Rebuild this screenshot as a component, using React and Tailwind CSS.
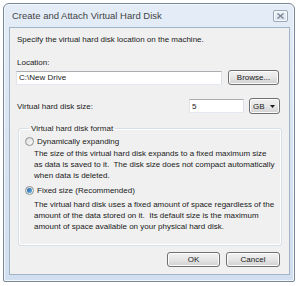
import React from "react";

function Radio({ checked }) {
  return (
    <span className="relative inline-flex h-[9px] w-[9px] shrink-0 items-center justify-center rounded-full border border-[#8e8f8f] bg-gradient-to-br from-[#dcdcdc] to-[#fbfbfb]">
      {checked && (
        <span className="h-[5px] w-[5px] rounded-full bg-gradient-to-br from-[#1b5d9b] to-[#6fb6e9] shadow-[0_0_1px_#9cd0f2]" />
      )}
    </span>
  );
}

function Button({ children, className }) {
  return (
    <div
      className={
        "flex h-[15px] items-center justify-center rounded-[3px] border border-[#707070] bg-gradient-to-b from-[#f2f2f2] via-[#e6e6e6] to-[#d0d0d0] text-[8px] leading-none text-[#1a1a1a] shadow-[inset_0_0_0_1px_#fcfcfc] " +
        (className || "")
      }
    >
      {children}
    </div>
  );
}

export default function App() {
  return (
    <div className="h-[286px] w-[300px] bg-white pl-[3px] pt-[3px] font-['Liberation_Sans',Arial,sans-serif] text-[#1a1a1a]">
      <div className="flex h-[279px] w-[292px] flex-col rounded-t-[6px] rounded-b-[2px] border border-[#7a8797] bg-gradient-to-b from-[#e4edf7] via-[#d8e4f2] to-[#d2dff0] shadow-[inset_0_0_0_1px_#f3f7fc]">
        {/* Title bar */}
        <div className="flex h-[23px] shrink-0 items-start justify-between pl-[8px] pr-[6px]">
          <span className="mt-[6px] text-[9.5px] leading-[12px] text-[#444]">
            Create and Attach Virtual Hard Disk
          </span>
          <div className="mt-[6px] flex h-[12px] w-[15px] items-center justify-center rounded-[2px] border border-[#9aa7b6] bg-gradient-to-b from-[#f0f4f9] to-[#d9e2ed] shadow-[inset_0_0_0_1px_#f7fafd]">
            <svg width="7" height="6" viewBox="0 0 7 6">
              <path d="M0.5 0.5 L6.5 5.5 M6.5 0.5 L0.5 5.5" stroke="#7d8a99" strokeWidth="1.5" />
            </svg>
          </div>
        </div>
        {/* Client area */}
        <div className="ml-[5px] mr-[4px] flex h-[248px] flex-col border border-[#a3b3c6] bg-[#f0f0f0] pb-[7px] pl-[6px] pr-[9px] text-[8px] leading-[11px]">
          <div className="ml-[1px] mt-[6px] h-[11px]">Specify the virtual hard disk location on the machine.</div>
          <div className="ml-[1px] mt-[12px] h-[11px]">Location:</div>
          <div className="mt-[2px] flex h-[15px] items-center gap-[6px]">
            <div className="flex h-[14px] w-[206px] items-center border border-[#abadb3] border-b-[#e3e9ef] border-l-[#e2e3ea] border-r-[#dbdfe6] bg-white pl-[2px]">
              C:\New Drive
            </div>
            <Button className="w-[51px]">Browse...</Button>
          </div>
          <div className="mt-[13px] flex h-[16px] items-center">
            <span className="ml-[1px] flex-1">Virtual hard disk size:</span>
            <div className="flex h-[14px] w-[55px] items-center border border-[#abadb3] border-b-[#e3e9ef] border-l-[#e2e3ea] border-r-[#dbdfe6] bg-white pl-[2px]">
              5
            </div>
            <div className="ml-[5px] flex h-[16px] w-[31px] items-center justify-between rounded-[3px] border border-[#707070] bg-gradient-to-b from-[#f2f2f2] via-[#e6e6e6] to-[#d0d0d0] pl-[3px] pr-[4px] shadow-[inset_0_0_0_1px_#fcfcfc]">
              <span>GB</span>
              <svg width="5" height="3" viewBox="0 0 5 3">
                <path d="M0 0 H5 L2.5 3 Z" fill="#1a1a1a" />
              </svg>
            </div>
          </div>
          <fieldset className="ml-[2px] mr-[-2px] mt-[9px] rounded-[3px] border border-[#d5dfe5] pb-[13px] pl-[6px] pr-[6px] shadow-[inset_0_0_0_1px_#ffffff]">
            <legend className="ml-[4px] px-[2px] leading-[11px]">Virtual hard disk format</legend>
            <div className="mt-[2px] flex h-[11px] items-center gap-[3px]">
              <Radio />
              <span>Dynamically expanding</span>
            </div>
            <div className="mt-[1px] pl-[9px]">
              The size of this virtual hard disk expands to a fixed maximum size as data is saved to it.&nbsp; The disk size does not compact automatically when data is deleted.
            </div>
            <div className="mt-[4px] flex h-[11px] items-center gap-[3px]">
              <Radio checked />
              <span>Fixed size (Recommended)</span>
            </div>
            <div className="mt-[3px] pl-[9px]">
              The virtual hard disk uses a fixed amount of space regardless of the amount of the data stored on it.&nbsp; Its default size is the maximum amount of space available on your physical hard disk.
            </div>
          </fieldset>
          <div className="mt-auto flex justify-end gap-[6px] pr-[-1px]">
            <Button className="w-[53px]">OK</Button>
            <Button className="w-[54px]">Cancel</Button>
          </div>
        </div>
      </div>
    </div>
  );
}
